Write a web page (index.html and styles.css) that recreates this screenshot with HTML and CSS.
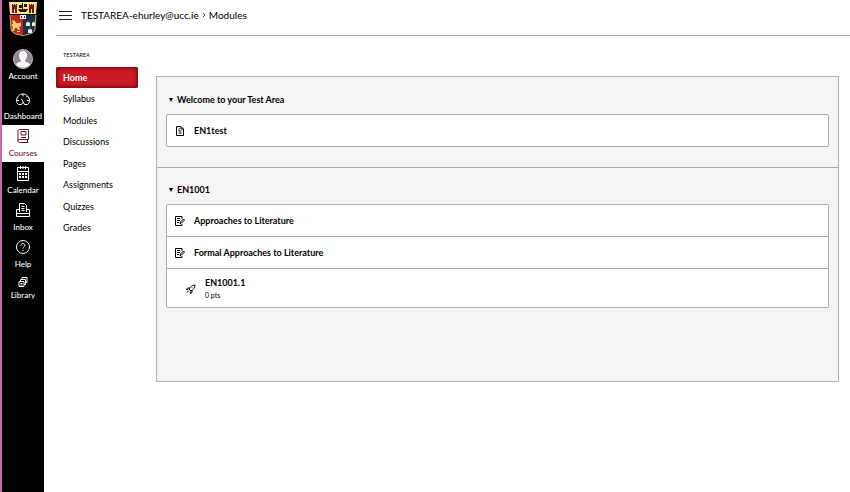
FILE: index.html
```
<!doctype html>
<html lang="en">
  <head>
    <meta charset="utf-8">
    <title>Modules</title>
    <link rel="stylesheet" href="styles.css">
  </head>
  <body>

    <nav class="global-nav" aria-label="Global">
      <a class="logo" href="#" aria-label="Home page">
        <svg width="30" height="38" viewBox="0 0 30 38">
          <path fill="#f6e592" d="M1 2h28l-1 12H2z"/>
          <path fill="#7c1512" d="M4 4h1v1h1V4h1v1h1V4h1v9H4zM21 4h1v1h1V4h1v1h1V4h1v9h-5z"/>
          <path fill="#f6e592" d="M6 9h1v4H6zM23 9h1v4h-1z"/>
          <path fill="#2b1208" d="M10 9h10l-2 3h-6zM14 3h1v6h-1zM11 5h3v3h-3zM16 4h3v3h-3z"/>
          <path fill="#c12522" d="M2 15h13v21c-3-2-11-1-12-7z"/>
          <path fill="#16304e" d="M15 15h13l-1 14c-1 6-9 5-12 7z"/>
          <path fill="#f3d06a" d="M4 20l3 1 1 2h4l1-1v4l-2 1 1 3h-2l-1-2H7l-1 3H4l1-4-2-2 2-1zM9 31h3v1H9z"/>
          <path fill="#f5efdc" d="M12 15h6v4h-6zM18 22l1 1 1-2 1 2 1-1v4h-4zM24 22l1 1 1-2 1 2v3h-3zM20 29l1 1 1-2 1 2 1-1v4h-4z"/>
          <path fill="#333" d="M13 16h1v2h-1zM16 16h1v2h-1z"/>
          <path fill="none" stroke="#d2b26a" d="M2 15l1 14c1 6 9 5 12 7 3-2 11-1 12-7l1-14"/>
        </svg>
      </a>
      <a class="nav-item account" href="#">
        <svg width="22" height="22" viewBox="0 0 22 22">
          <circle cx="11" cy="11" r="9.500" fill="#8f8a90" stroke="#dcaed3"/>
          <path fill="#fff" d="M11 3c3 0 4 2 4 4.500 0 2-1 4-2 5v1c2 .5 4 1 5 3-2 2-4 3-7 3s-5-1-7-3c1-2 3-2.500 5-3v-1c-1-1-2-3-2-5C7 5 8 3 11 3z"/>
        </svg>
        <span>Account</span>
      </a>
      <a class="nav-item dashboard" href="#">
        <svg class="line" width="16" height="16" viewBox="0 0 16 16">
          <path d="M3.500 13.500C2 12.500 1.500 11 1.500 9.500 1.500 6 4.500 3 8 3s6.500 3 6.500 6.500c0 1.500-.5 3-2 4h-3L6.500 8M3.500 13.500h3L8 11.500M8 3v2.500M1.500 9.500H4M12 9.500h2.500M11.300 6.200l1.300-1.300"/>
        </svg>
        <span>Dashboard</span>
      </a>
      <a class="nav-item active" href="#" aria-current="true">
        <svg class="line" width="16" height="16" viewBox="0 0 16 16">
          <path d="M3 13V3c0-1 .5-1.500 1.500-1.500h9v10h-9C3.500 11.500 3 12 3 13s.5 1.500 1.500 1.500h9M12.500 11.500v3M6 3.500h5V7H6zM6 9.500h5"/>
        </svg>
        <span>Courses</span>
      </a>
      <a class="nav-item" href="#">
        <svg class="line" width="16" height="16" viewBox="0 0 16 16">
          <path d="M2.500 2.500h11v13h-11zM2.500 6.500h11M5.500 1v3M8 1v3M10.500 1v3"/>
          <path stroke-width="2" stroke-dasharray="2 1" d="M4 9h8M4 12h8"/>
        </svg>
        <span>Calendar</span>
      </a>
      <a class="nav-item" href="#">
        <svg class="line" width="16" height="16" viewBox="0 0 16 16">
          <path d="M4.500 10V1.500h5l2 2V10M6.500 4.500h3M6.500 6.500h3M6.500 8.500h3M4.500 7.500h-3v7h13v-7h-3M1.500 11.500h13"/>
        </svg>
        <span>Inbox</span>
      </a>
      <a class="nav-item" href="#">
        <svg class="line" width="16" height="16" viewBox="0 0 16 16">
          <circle cx="8" cy="8" r="6.500"/>
          <path d="M6 6.500C6 5 7 4.500 8 4.500s2 .7 2 1.800C10 7.500 8 7.700 8 9.500M8 10.800V12"/>
        </svg>
        <span>Help</span>
      </a>
      <a class="nav-item small" href="#">
        <svg class="line" width="10" height="12" viewBox="0 0 10 12">
          <path d="M1 5.500h5v5H1zM2.500 5.500v-2h5v5H6M4 3.500v-2h5v5H7.500M2.500 7.500h2M2.500 9h2"/>
        </svg>
        <span>Library</span>
      </a>
    </nav>

    <div class="wrapper">
      <header class="top-bar">
        <button class="menu-toggle" type="button" aria-label="Toggle course menu">
          <span></span><span></span><span></span>
        </button>
        <nav class="crumbs" aria-label="Breadcrumb">
          <a href="#">TESTAREA-ehurley@ucc.ie</a>
          <svg width="4" height="6" viewBox="0 0 4 6"><path fill="none" stroke="#555" d="M1 1l2 2-2 2"/></svg>
          <span>Modules</span>
        </nav>
      </header>

      <div class="main">
        <nav class="course-nav" aria-label="Course">
          <div class="term">TESTAREA</div>
          <ul>
            <li><a class="active" href="#">Home</a></li>
            <li><a href="#">Syllabus</a></li>
            <li><a href="#">Modules</a></li>
            <li><a href="#">Discussions</a></li>
            <li><a href="#">Pages</a></li>
            <li><a href="#">Assignments</a></li>
            <li><a href="#">Quizzes</a></li>
            <li><a href="#">Grades</a></li>
          </ul>
        </nav>

        <main class="modules">
          <section class="module">
            <button class="module-title" type="button" aria-expanded="true">
              <svg width="4" height="4" viewBox="0 0 4 4"><path d="M0 0h4L2 4z"/></svg>
              Welcome to your Test Area
            </button>
            <ul class="items">
              <li class="item">
                <svg class="line" width="10" height="10" viewBox="0 0 10 10">
                  <path d="M1.500.5H6L8.500 3v6.500h-7zM6 .5V3h2.500M3.500 3H5M3.500 5h3M3.500 7h3"/>
                </svg>
                <a href="#">EN1test</a>
              </li>
            </ul>
          </section>
          <section class="module">
            <button class="module-title" type="button" aria-expanded="true">
              <svg width="4" height="4" viewBox="0 0 4 4"><path d="M0 0h4L2 4z"/></svg>
              EN1001
            </button>
            <ul class="items">
              <li class="item">
                <svg class="line" width="10" height="10" viewBox="0 0 10 10">
                  <path d="M7 3V.5H.5v9H7V8M2 2.500h3M2 4.500h3M2 6.500h2M5 7.500l.5-1.500 3-3 1 1-3 3z"/>
                </svg>
                <a href="#">Approaches to Literature</a>
              </li>
              <li class="item">
                <svg class="line" width="10" height="10" viewBox="0 0 10 10">
                  <path d="M7 3V.5H.5v9H7V8M2 2.500h3M2 4.500h3M2 6.500h2M5 7.500l.5-1.500 3-3 1 1-3 3z"/>
                </svg>
                <a href="#">Formal Approaches to Literature</a>
              </li>
              <li class="item indent">
                <svg class="line" width="10" height="10" viewBox="0 0 10 10">
                  <path d="M3 5C4.500 2.500 6.500 1 9 1c0 2.500-1.500 4.500-4 6zM3.500 4H1.500L.5 5.500l2 .5M6 6.500v2L4.500 9.500 4 7.500M2.500 7L1 8.500M6 3.500l.5.5"/>
                </svg>
                <div>
                  <a href="#">EN1001.1</a>
                  <div class="points">0 pts</div>
                </div>
              </li>
            </ul>
          </section>
        </main>
      </div>
    </div>

  </body>
</html>
```
FILE: styles.css
```
* {
  box-sizing: border-box;
}
body {
  margin: 0;
  display: flex;
  min-height: 100vh;
  font-family: Lato, "Liberation Sans", sans-serif;
  font-size: 9px;
  line-height: 12px;
  color: #000;
  background: #fff;
}
a {
  color: inherit;
  text-decoration: none;
}
ul {
  list-style: none;
  margin: 0;
  padding: 0;
}
button {
  font: inherit;
  color: inherit;
  background: none;
  border: 0;
  padding: 0;
  cursor: pointer;
}
svg {
  display: block;
  flex: none;
}
.line {
  fill: none;
  stroke: currentColor;
}

/* black bar on the left */
.global-nav {
  flex: none;
  width: 44px;
  background: #000;
  border-left: 2px solid #c56cae;
  color: #fff;
  font-size: 8px;
  font-weight: 500;
}
.logo {
  display: flex;
  justify-content: center;
  height: 48px;
}
.nav-item {
  display: flex;
  flex-direction: column;
  align-items: center;
  justify-content: flex-end;
  height: 37px;
  line-height: 12px;
  padding-bottom: 3px;
  gap: 3px;
}
.nav-item.account {
  gap: 0;
}
.nav-item.dashboard {
  height: 40px;
}
.nav-item.active {
  background: #fff;
  color: #6a1822;
}
.nav-item.small {
  height: 31px;
  gap: 1px;
}

.wrapper {
  flex: 1;
  min-width: 0;
  padding-left: 12px;
}
.top-bar {
  display: flex;
  align-items: center;
  gap: 9px;
  height: 36px;
  padding: 0 3px 5px;
  border-bottom: 1px solid #aaa;
}
.menu-toggle {
  display: flex;
  flex-direction: column;
  gap: 3px;
  width: 13px;
}
.menu-toggle span {
  height: 1px;
  background: #222;
}
.crumbs {
  display: flex;
  align-items: center;
  gap: 3px;
  font-size: 10px;
}

.main {
  display: flex;
  gap: 18px;
  padding-right: 11px;
}
.course-nav {
  flex: none;
  width: 82px;
  padding-top: 13px;
}
.term {
  padding-left: 7px;
  margin-bottom: 6px;
  font-size: 6px;
  font-style: italic;
}
.course-nav ul {
  display: flex;
  flex-direction: column;
  justify-content: space-between;
  min-height: 171px;
}
.course-nav a {
  display: block;
  padding-left: 7px;
  line-height: 21px;
}
.course-nav a.active {
  background: #cc1b26;
  border-radius: 2px;
  box-shadow: inset 0 0 4px 1px #6d0008;
  color: #fff;
  font-weight: bold;
}

.modules {
  flex: 1;
  min-width: 0;
  min-height: 306px;
  margin-top: 40px;
  background: #f4f4f4;
  border: 1px solid #b4b4b4;
  font-weight: bold;
}
.module {
  padding: 17px 9px 20px;
}
.module + .module {
  padding-top: 16px;
  border-top: 1px solid #aaa;
}
.module-title {
  display: flex;
  align-items: center;
  gap: 4px;
  padding-left: 3px;
  margin-bottom: 8px;
  line-height: 12px;
}
.items {
  background: #fff;
  border: 1px solid #aaa;
  border-radius: 2px;
}
.item {
  display: flex;
  align-items: center;
  gap: 9px;
  min-height: 31px;
  padding-left: 8px;
}
.item + .item {
  min-height: 32px;
  border-top: 1px solid #aaa;
}
.item.item.indent {
  min-height: 39px;
  padding-top: 2px;
  padding-left: 19px;
}
.points {
  font-size: 7px;
  font-weight: normal;
}
```
